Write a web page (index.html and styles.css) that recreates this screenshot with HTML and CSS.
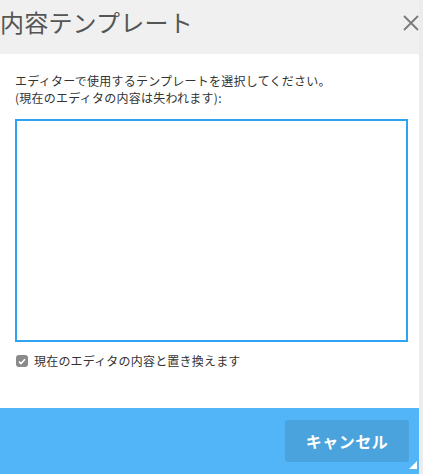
FILE: index.html
```
<!DOCTYPE html>
<html lang="ja">
  <head>
    <meta charset="UTF-8" />
    <title>内容テンプレート</title>
    <link rel="stylesheet" href="styles.css">
  </head>
  <body>
    <div class="page">
      <div class="dialog">
        <header class="dialog-header">
          <h1>内容テンプレート</h1>
          <button class="close-button" aria-label="閉じる">
            <svg width="16" height="16" viewBox="0 0 16 16">
              <path d="M1 1 L15 15 M15 1 L1 15" stroke="#7a7a7a" stroke-width="1.8" fill="none" />
            </svg>
          </button>
        </header>

        <div class="dialog-body">
          <p class="intro">
            エディターで使用するテンプレートを選択してください。<br />
            (現在のエディタの内容は失われます):
          </p>
          <div class="template-box"></div>
          <label class="replace-option">
            <span class="check-box">
              <svg width="8" height="7" viewBox="0 0 8 7">
                <path d="M1 3.6 L3 5.6 L7 1.2" stroke="#fff" stroke-width="1.6" fill="none" />
              </svg>
            </span>
            現在のエディタの内容と置き換えます
          </label>
        </div>

        <footer class="dialog-footer">
          <a href="#" class="cancel-button">キャンセル</a>
          <span class="resize-handle"></span>
        </footer>
      </div>
      <div class="side-strip"></div>
    </div>
  </body>
</html>
```

FILE: styles.css
```
* {
  box-sizing: border-box;
  margin: 0;
  padding: 0;
}

html,
body {
  height: 100%;
  overflow: hidden;
}

body {
  font-family: "Noto Sans CJK JP", "Noto Sans", sans-serif;
  background-color: #ececec;
  color: #333333;
}

.page {
  display: flex;
  height: 100%;
}

.dialog {
  width: 419px;
  flex-shrink: 0;
  display: flex;
  flex-direction: column;
  background-color: #ffffff;
}

.side-strip {
  flex-grow: 1;
  background-color: #ececec;
}

/* header */
.dialog-header {
  height: 54px;
  background-color: #f0f0f0;
  display: flex;
  align-items: center;
  justify-content: space-between;
  flex-shrink: 0;
}

.dialog-header h1 {
  font-size: 24px;
  font-weight: 400;
  color: #555555;
  line-height: 1;
  margin-top: -10px;
  letter-spacing: 0.2px;
}

.close-button {
  border: none;
  background: none;
  width: 16px;
  height: 16px;
  margin-right: 0;
  margin-top: -8px;
  display: flex;
  cursor: pointer;
}

/* body */
.dialog-body {
  flex-grow: 1;
  padding: 18px 11px 0 15px;
}

.intro {
  font-size: 12px;
  line-height: 17px;
  color: #333333;
  letter-spacing: 0.25px;
}

.template-box {
  margin-top: 13px;
  height: 223px;
  border: 2px solid #2ea3f2;
  background-color: #ffffff;
}

.replace-option {
  display: flex;
  align-items: center;
  gap: 6px;
  margin-top: 12px;
  margin-left: 1px;
  font-size: 12px;
  color: #333333;
  line-height: 14px;
  letter-spacing: 0.2px;
}

.check-box {
  width: 12px;
  height: 12px;
  border-radius: 3px;
  background-color: #8a8a8a;
  display: flex;
  align-items: center;
  justify-content: center;
}

/* footer */
.dialog-footer {
  height: 66px;
  flex-shrink: 0;
  background-color: #52b5f8;
  display: flex;
  justify-content: flex-end;
  align-items: flex-start;
  padding: 12px 10px 0 0;
  position: relative;
}

.cancel-button {
  width: 124px;
  height: 42px;
  border-radius: 3px;
  background-color: #4aa3dc;
  color: #ffffff;
  font-size: 16px;
  font-weight: 700;
  text-decoration: none;
  display: flex;
  align-items: center;
  justify-content: center;
  letter-spacing: 0.5px;
}

.resize-handle {
  position: absolute;
  right: 2px;
  bottom: 5px;
  width: 0;
  height: 0;
  border-left: 8px solid transparent;
  border-bottom: 8px solid #ffffff;
}
```
